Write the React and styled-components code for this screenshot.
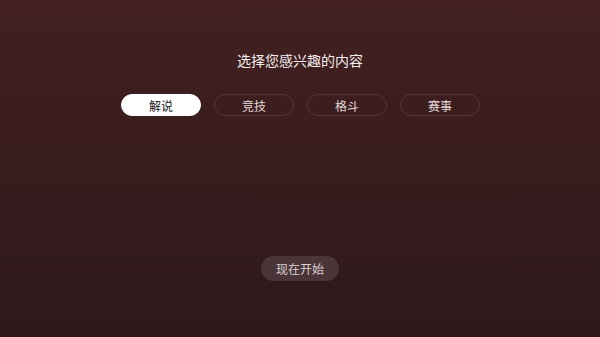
import styled, { createGlobalStyle } from "styled-components";

const GlobalStyle = createGlobalStyle`
  html, body {
    margin: 0;
    padding: 0;
  }

  body {
    font-family: "Noto Sans CJK SC", "Noto Sans", sans-serif;
  }
`;

const topics = ["解说", "竞技", "格斗", "赛事"];

export default function App() {
  return (
    <>
      <GlobalStyle />
      <StPage>
        <StTitle>选择您感兴趣的内容</StTitle>
        <StTagList>
          {topics.map((topic, i) => (
            <StTag key={topic} $active={i === 0}>
              {topic}
            </StTag>
          ))}
        </StTagList>
        <StStartButton>现在开始</StStartButton>
      </StPage>
    </>
  );
}

const StPage = styled.main`
  display: flex;
  flex-direction: column;
  align-items: center;

  box-sizing: border-box;
  padding-top: 49px;
  width: 600px;
  height: 337px;
  background: linear-gradient(180deg, #43201f 0%, #3a1d1f 45%, #2d191c 100%);
`;

const StTitle = styled.h1`
  margin: 0;
  height: 22px;
  line-height: 22px;
  font-size: 14px;
  font-weight: 400;
  color: #f4eeee;
`;

const StTagList = styled.div`
  display: flex;
  gap: 13px;

  margin-top: 23px;
  margin-left: 1px;
`;

const StTag = styled.button`
  display: flex;
  align-items: center;
  justify-content: center;

  box-sizing: border-box;
  padding: 0;
  width: 80px;
  height: 22px;
  border: 1px solid ${({ $active }) => ($active ? "#ffffff" : "#573434")};
  border-radius: 11px;
  background: ${({ $active }) => ($active ? "#ffffff" : "transparent")};
  color: ${({ $active }) => ($active ? "#151515" : "#e2d8d8")};
  font-family: inherit;
  font-size: 12px;
`;

const StStartButton = styled.button`
  display: flex;
  align-items: center;
  justify-content: center;

  box-sizing: border-box;
  margin-top: 140px;
  padding: 0;
  width: 78px;
  height: 25px;
  border: none;
  border-radius: 12.5px;
  background: rgba(255, 255, 255, 0.12);
  color: #ddd2d2;
  font-family: inherit;
  font-size: 12px;
`;
